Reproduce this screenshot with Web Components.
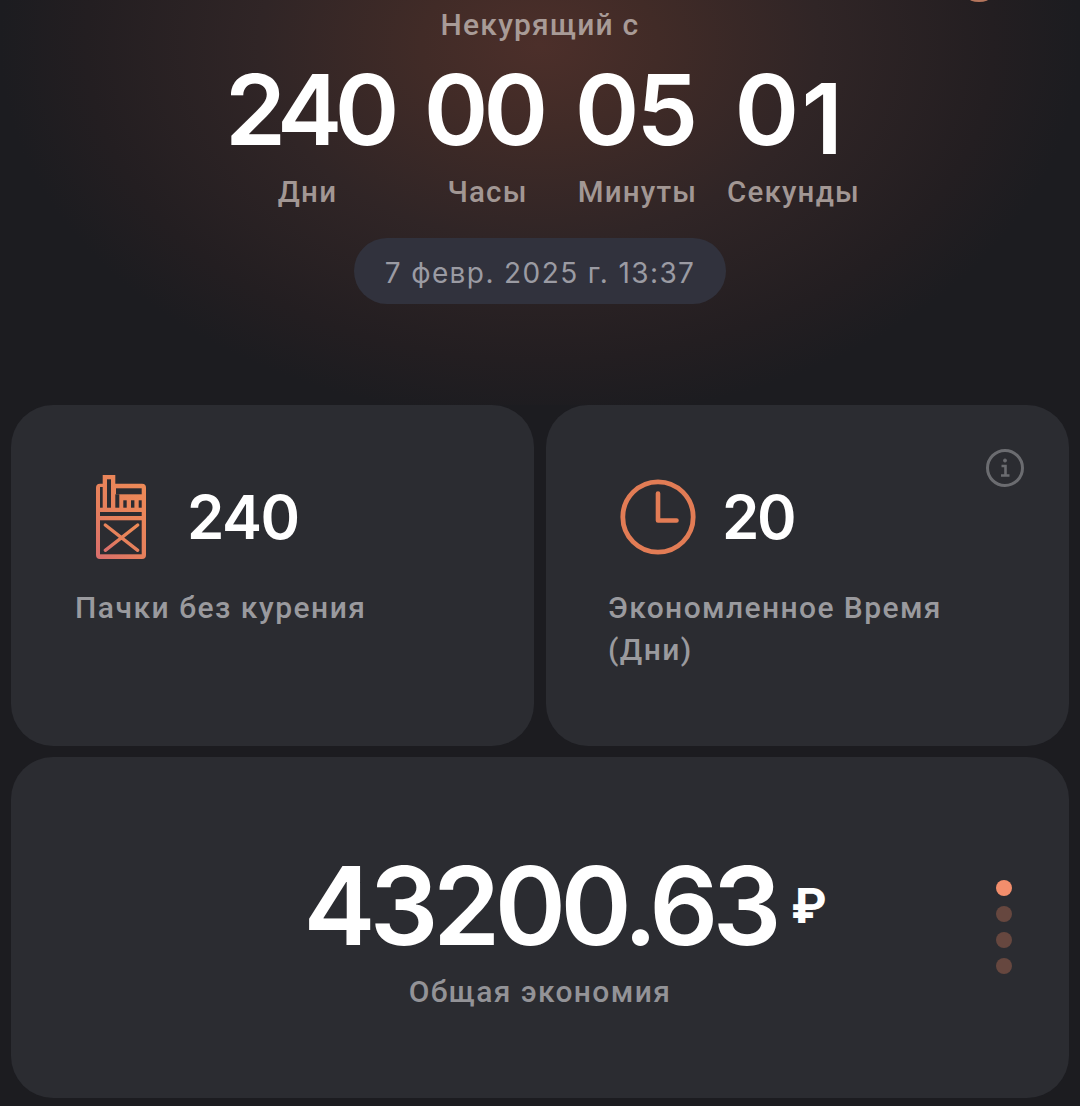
<!DOCTYPE html>
<html lang="ru">
<head>
<meta charset="utf-8">
<title>Некурящий</title>
<style>
    html, body { margin: 0; background: #1c1c20; }
    body { width: 1080px; height: 1106px; overflow: hidden; }
</style>
</head>
<body>
<quit-hero>
    <timer-unit label="Дни" w="168" shift="10" track="-7.500" nudge="8">240</timer-unit>
    <timer-unit label="Часы" w="118" track="-5" nudge="8">00</timer-unit>
    <timer-unit label="Минуты" w="118" track="-3" nudge="5">05</timer-unit>
    <timer-unit label="Секунды" w="130" track="-4.500" nudge="14">0<span style="display:inline-block;transform:translateY(9px);margin-left:7px">1</span></timer-unit>
</quit-hero>
<div style="display:grid;grid-template-columns:523px 523px;gap:11px 12px;padding:0 11px">
    <stat-card value="240" label="Пачки без курения" inset="21" gap="41" track="-1.500" pad="64" ls="1.5">
        <svg slot="icon" width="50" height="84" viewBox="0 0 50 84">
            <defs>
                <linearGradient id="pk" x1="0.8" y1="0" x2="0.1" y2="1">
                    <stop offset="0" stop-color="#ee8a57"/>
                    <stop offset="0.6" stop-color="#e57f5c"/>
                    <stop offset="1" stop-color="#d96f6b"/>
                </linearGradient>
            </defs>
            <path fill="url(#pk)" d="M6.7 0H19.3V8.7H46a4 4 0 0 1 4 4V80a4 4 0 0 1-4 4H4a4 4 0 0 1-4-4V12.7a4 4 0 0 1 4-4H6.7Z"/>
            <g fill="#2b2c31">
                <rect x="4" y="12" width="2.7" height="20.7"/>
                <rect x="11" y="4.3" width="4" height="28.4"/>
                <rect x="19.3" y="19.3" width="4" height="13.4"/>
                <rect x="27.3" y="25.3" width="3.4" height="7.4"/>
                <rect x="35" y="25.3" width="3.4" height="7.4"/>
                <rect x="42.7" y="25.3" width="3" height="7.4"/>
                <rect x="20" y="13.3" width="25.7" height="6"/>
                <rect x="4" y="37" width="41.7" height="4"/>
                <rect x="4" y="45.3" width="41.7" height="34"/>
            </g>
            <path d="M9.3 50 41.7 75.3M41.7 50 9.3 75.3" stroke="url(#pk)" stroke-width="3.4" stroke-linecap="round" fill="none"/>
        </svg>
    </stat-card>
    <stat-card value="20" label="Экономленное Время (Дни)" inset="12" gap="26" track="-2.500" pad="62" ls="1.4" info>
        <svg slot="icon" width="76" height="76" viewBox="0 0 76 76" fill="none" stroke="#e27c55" stroke-linecap="round" stroke-linejoin="round">
            <circle cx="38" cy="38" r="35.2" stroke-width="4.8"/>
            <path d="M38 14.500V41.500H56.500" stroke-width="4.600"/>
        </svg>
    </stat-card>
    <savings-card style="grid-column:1 / 3" value="43200.63" label="Общая экономия"></savings-card>
</div>
<script>
class QuitHero extends HTMLElement {
    constructor() {
        super();
        this.attachShadow({ mode: "open" }).innerHTML = `
            <style>
                :host {
                    display: flex;
                    flex-direction: column;
                    align-items: center;
                    height: 405px;
                    position: relative;
                    background: radial-gradient(ellipse 540px 375px at 540px 45px, #4c2f2a 0%, #412b27 22%, #302526 52%, #231e21 84%, #1c1c20 100%);
                    font-family: Roboto, "Liberation Sans", sans-serif;
                }
                .title {
                    margin-top: 7px;
                    height: 36px;
                    line-height: 36px;
                    font-size: 30px;
                    font-weight: 500;
                    letter-spacing: 1.200px;
                    color: #a89b97;
                }
                .row {
                    display: flex;
                    margin-top: 13px;
                    gap: 32px;
                    padding-left: 7px;
                }
                .pill {
                    margin-top: 28px;
                    width: 372px;
                    height: 66px;
                    box-sizing: border-box;
                    padding-top: 3px;
                    border-radius: 33px;
                    background: #31323d;
                    display: flex;
                    align-items: center;
                    justify-content: center;
                    font-family: Inter, Roboto, sans-serif;
                    font-size: 28px;
                    letter-spacing: 1.400px;
                    color: #9b9ba3;
                }
                .spot {
                    position: absolute;
                    left: 968px;
                    top: -7px;
                    width: 22px;
                    height: 9px;
                    border-radius: 50%;
                    background: #b5755c;
                }
            </style>
            <div class="spot"></div>
            <div class="title">Некурящий с</div>
            <div class="row"><slot></slot></div>
            <div class="pill">7 февр. 2025 г. 13:37</div>
        `;
    }
}

class TimerUnit extends HTMLElement {
    constructor() {
        super();
        const track = this.getAttribute("track") || "-3";
        const nudge = this.getAttribute("nudge") || "0";
        const shift = this.getAttribute("shift") || "0";
        this.attachShadow({ mode: "open" }).innerHTML = `
            <style>
                :host {
                    display: flex;
                    flex-direction: column;
                    align-items: center;
                    width: ${this.getAttribute("w")}px;
                }
                .num {
                    height: 108px;
                    line-height: 108px;
                    margin-right: ${nudge}px;
                    font-family: Inter, sans-serif;
                    font-size: 98px;
                    font-weight: 600;
                    letter-spacing: ${track}px;
                    color: #fff;
                    white-space: nowrap;
                }
                .label {
                    margin-top: 10px;
                    margin-right: ${shift}px;
                    height: 36px;
                    line-height: 36px;
                    font-size: 29.500px;
                    font-weight: 500;
                    letter-spacing: 1.200px;
                    color: #a29794;
                    white-space: nowrap;
                }
            </style>
            <div class="num"><slot></slot></div>
            <div class="label">${this.getAttribute("label")}</div>
        `;
    }
}

class StatCard extends HTMLElement {
    constructor() {
        super();
        const info = this.hasAttribute("info")
            ? `<svg class="info" width="40" height="40" viewBox="0 0 40 40" fill="none" stroke="#6b6c70">
                   <circle cx="20" cy="20" r="17.500" stroke-width="3"/>
                   <circle cx="20" cy="12.500" r="1.500" fill="#6b6c70" stroke-width="1"/>
                   <path d="M16.500 18H20.500V27M16 27.500H24.500" stroke-width="2.600"/>
               </svg>`
            : "";
        this.attachShadow({ mode: "open" }).innerHTML = `
            <style>
                :host {
                    display: block;
                    position: relative;
                    height: 341px;
                    box-sizing: border-box;
                    border-radius: 42px;
                    background: #2b2c31;
                    padding: 68px 64px 0 ${this.getAttribute("pad")}px;
                    font-family: Roboto, "Liberation Sans", sans-serif;
                }
                .top {
                    display: flex;
                    align-items: center;
                    height: 88px;
                    padding-left: ${this.getAttribute("inset")}px;
                    gap: ${this.getAttribute("gap")}px;
                }
                .value {
                    font-family: Inter, sans-serif;
                    font-size: 60px;
                    font-weight: 600;
                    letter-spacing: ${this.getAttribute("track")}px;
                    color: #fff;
                }
                .label {
                    margin-top: 26px;
                    font-size: 30px;
                    line-height: 42px;
                    font-weight: 500;
                    letter-spacing: ${this.getAttribute("ls")}px;
                    color: #9a9a9e;
                }
                .info {
                    position: absolute;
                    top: 43px;
                    right: 44px;
                }
            </style>
            ${info}
            <div class="top">
                <slot name="icon"></slot>
                <div class="value">${this.getAttribute("value")}</div>
            </div>
            <div class="label">${this.getAttribute("label")}</div>
        `;
    }
}

class PagerDots extends HTMLElement {
    constructor() {
        super();
        this.attachShadow({ mode: "open" }).innerHTML = `
            <style>
                :host {
                    display: flex;
                    flex-direction: column;
                    gap: 10px;
                }
                i {
                    width: 16px;
                    height: 16px;
                    border-radius: 50%;
                    background: #66473f;
                }
                i.on { background: #f28e6c; }
            </style>
            <i class="on"></i><i></i><i></i><i></i>
        `;
    }
}

class SavingsCard extends HTMLElement {
    constructor() {
        super();
        this.attachShadow({ mode: "open" }).innerHTML = `
            <style>
                :host {
                    display: flex;
                    flex-direction: column;
                    align-items: center;
                    position: relative;
                    height: 341px;
                    box-sizing: border-box;
                    border-radius: 42px;
                    background: #2b2c31;
                    padding-top: 88px;
                    font-family: Roboto, "Liberation Sans", sans-serif;
                }
                .amount {
                    display: flex;
                    align-items: center;
                    gap: 15px;
                    height: 120px;
                    padding-left: 50px;
                    color: #fff;
                    font-family: Inter, sans-serif;
                }
                .num {
                    font-size: 108px;
                    font-weight: 600;
                    letter-spacing: -5.500px;
                }
                .cur {
                    font-size: 48px;
                    font-weight: 700;
                }
                .label {
                    margin-top: 9px;
                    font-size: 30px;
                    font-weight: 500;
                    letter-spacing: 1.400px;
                    color: #939397;
                }
                pager-dots {
                    position: absolute;
                    top: 123px;
                    right: 57px;
                }
            </style>
            <div class="amount"><span class="num">${this.getAttribute("value")}</span><span class="cur">₽</span></div>
            <div class="label">${this.getAttribute("label")}</div>
            <pager-dots></pager-dots>
        `;
    }
}

customElements.define("quit-hero", QuitHero);
customElements.define("timer-unit", TimerUnit);
customElements.define("stat-card", StatCard);
customElements.define("pager-dots", PagerDots);
customElements.define("savings-card", SavingsCard);
</script>
</body>
</html>
